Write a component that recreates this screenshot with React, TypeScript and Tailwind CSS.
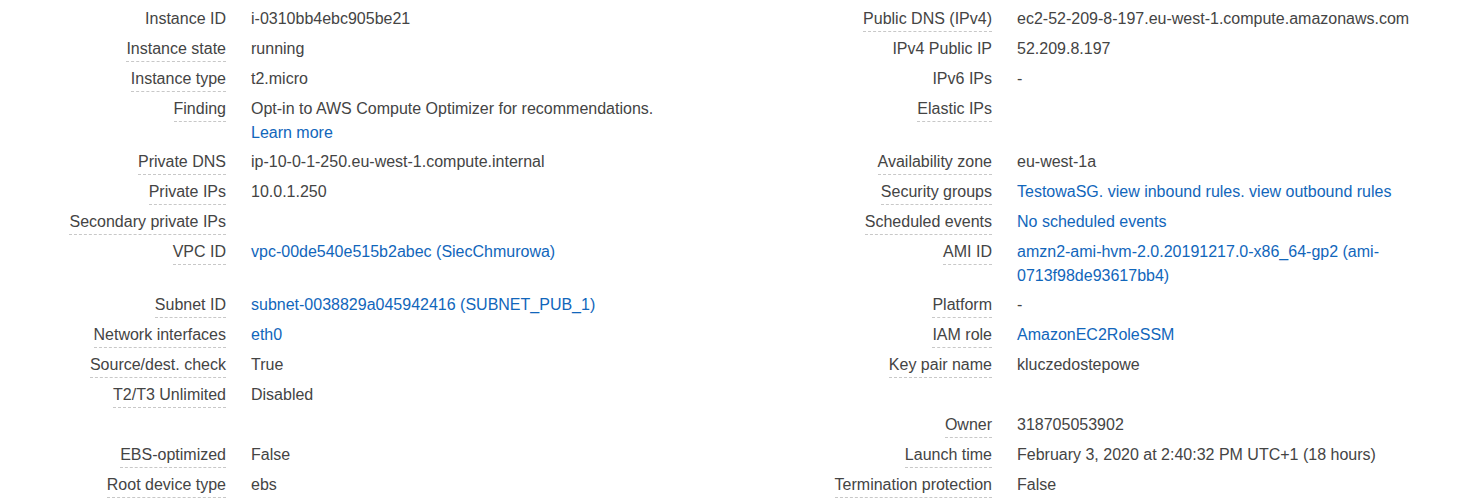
import React from "react";

type Cell = { label?: string; value?: React.ReactNode; plain?: boolean };

const Link = ({ children }: { children: React.ReactNode }) => (
  <a className="text-[#1166bb] cursor-pointer">{children}</a>
);

const rows: [Cell, Cell][] = [
  [
    { label: "Instance ID", value: "i-0310bb4ebc905be21", plain: true },
    { label: "Public DNS (IPv4)", value: "ec2-52-209-8-197.eu-west-1.compute.amazonaws.com" },
  ],
  [
    { label: "Instance state", value: "running" },
    { label: "IPv4 Public IP", value: "52.209.8.197", plain: true },
  ],
  [
    { label: "Instance type", value: "t2.micro" },
    { label: "IPv6 IPs", value: "-", plain: true },
  ],
  [
    {
      label: "Finding",
      value: (
        <>
          <div>Opt-in to AWS Compute Optimizer for recommendations.</div>
          <Link>Learn more</Link>
        </>
      ),
    },
    { label: "Elastic IPs", value: "" },
  ],
  [
    { label: "Private DNS", value: "ip-10-0-1-250.eu-west-1.compute.internal" },
    { label: "Availability zone", value: "eu-west-1a" },
  ],
  [
    { label: "Private IPs", value: "10.0.1.250" },
    {
      label: "Security groups",
      value: (
        <Link>TestowaSG. view inbound rules. view outbound rules</Link>
      ),
    },
  ],
  [
    { label: "Secondary private IPs", value: "" },
    { label: "Scheduled events", value: <Link>No scheduled events</Link> },
  ],
  [
    { label: "VPC ID", value: <Link>vpc-00de540e515b2abec (SiecChmurowa)</Link> },
    {
      label: "AMI ID",
      value: <Link>amzn2-ami-hvm-2.0.20191217.0-x86_64-gp2 (ami-0713f98de93617bb4)</Link>,
    },
  ],
  [
    { label: "Subnet ID", value: <Link>subnet-0038829a045942416 (SUBNET_PUB_1)</Link> },
    { label: "Platform", value: "-" },
  ],
  [
    { label: "Network interfaces", value: <Link>eth0</Link> },
    { label: "IAM role", value: <Link>AmazonEC2RoleSSM</Link> },
  ],
  [
    { label: "Source/dest. check", value: "True" },
    { label: "Key pair name", value: "kluczedostepowe" },
  ],
  [
    { label: "T2/T3 Unlimited", value: "Disabled" },
    {},
  ],
  [
    {},
    { label: "Owner", value: "318705053902" },
  ],
  [
    { label: "EBS-optimized", value: "False" },
    { label: "Launch time", value: "February 3, 2020 at 2:40:32 PM UTC+1 (18 hours)" },
  ],
  [
    { label: "Root device type", value: "ebs" },
    { label: "Termination protection", value: "False" },
  ],
];

function LabelCell({ cell }: { cell: Cell }) {
  return (
    <div className="text-right pt-[3px] pb-[2px]">
      {cell.label && (
        <span
          className={
            "inline-block leading-6 " +
            (cell.plain ? "" : "border-b border-dashed border-[#c8c8c8]")
          }
        >
          {cell.label}
        </span>
      )}
    </div>
  );
}

function ValueCell({ cell }: { cell: Cell }) {
  return <div className="pl-[25px] pt-[3px] pb-[2px] leading-6">{cell.value}</div>;
}

export default function App() {
  return (
    <div className="bg-white w-[1482px] h-[502px] overflow-hidden pt-[4px] text-[16px] text-[#444] font-['Liberation_Sans',Arial,sans-serif]">
      <div className="grid grid-cols-[226px_540px_226px_1fr]">
        {rows.map(([left, right], i) => (
          <React.Fragment key={i}>
            <LabelCell cell={left} />
            <ValueCell cell={left} />
            <LabelCell cell={right} />
            <ValueCell cell={right} />
          </React.Fragment>
        ))}
      </div>
    </div>
  );
}
